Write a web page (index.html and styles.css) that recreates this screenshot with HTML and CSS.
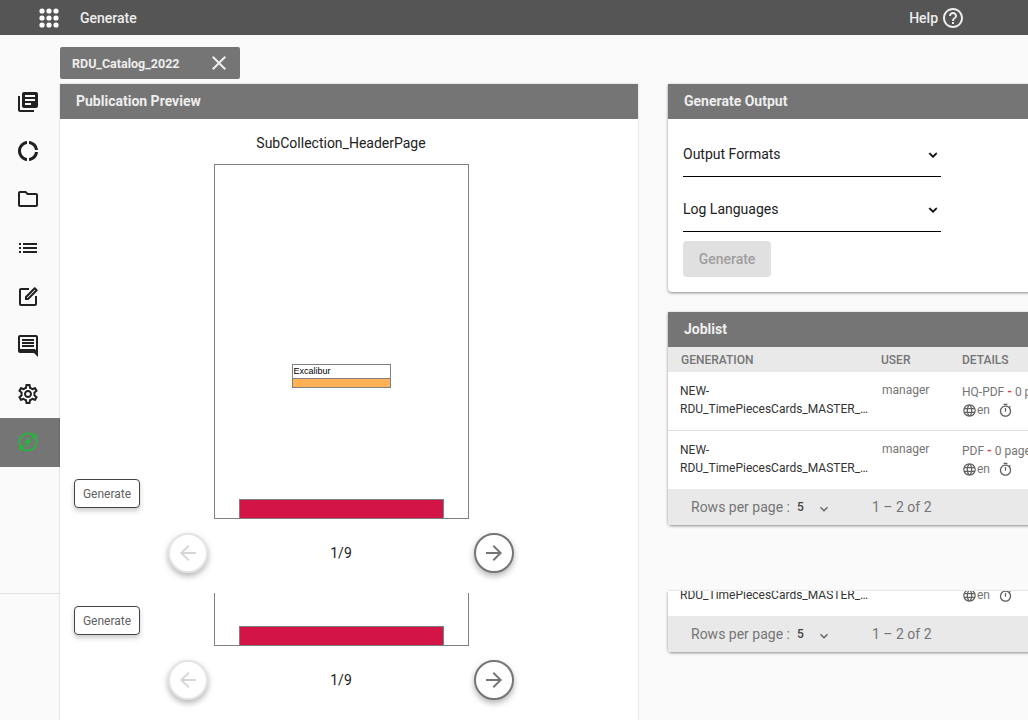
FILE: index.html
```html
<!DOCTYPE html>
<html lang="en">
<head>
  <meta charset="UTF-8" />
  <meta name="viewport" content="width=device-width, initial-scale=1.0"/>
  <title>Generate</title>
  <link rel="stylesheet" href="styles.css">
</head>
<body>
  <svg class="icon-defs" aria-hidden="true">
    <symbol id="i-books" viewBox="0 0 24 24"><path d="M4 6H2v14c0 1.1.9 2 2 2h14v-2H4V6zm16-4H8c-1.1 0-2 .9-2 2v12c0 1.1.9 2 2 2h12c1.1 0 2-.9 2-2V4c0-1.1-.9-2-2-2zm-1 9H9V9h10v2zm-4 4H9v-2h6v2zm4-8H9V5h10v2z"/></symbol>
    <symbol id="i-donut" viewBox="0 0 24 24"><path d="M11 5.08V2c-5 .5-9 4.81-9 10s4 9.5 9 10v-3.08c-3-.48-6-3.19-6-6.92s3-6.44 6-6.92zM18.97 11H22c-.47-5-4-8.53-9-9v3.08C16 5.51 18.54 8 18.97 11zM13 18.92V22c5-.47 8.53-4 9-9h-3.03c-.43 3-2.97 5.49-5.97 5.92z"/></symbol>
    <symbol id="i-folder" viewBox="0 0 24 24"><path d="M9.17 6l2 2H20v10H4V6h5.17M10 4H4c-1.1 0-1.99.9-1.99 2L2 18c0 1.1.9 2 2 2h16c1.1 0 2-.9 2-2V8c0-1.1-.9-2-2-2h-8l-2-2z"/></symbol>
    <symbol id="i-list" viewBox="0 0 24 24"><path d="M3 13h2v-2H3v2zm0 4h2v-2H3v2zm0-8h2V7H3v2zm4 4h14v-2H7v2zm0 4h14v-2H7v2zM7 7v2h14V7H7z"/></symbol>
    <symbol id="i-edit" viewBox="0 0 24 24"><path d="M5 5h8V3H5c-1.1 0-2 .9-2 2v14c0 1.1.9 2 2 2h14c1.1 0 2-.9 2-2v-8h-2v8H5V5z"/><path d="M18 2.6 9 11.6V15h3.4l9-9c.4-.4.4-1 0-1.4l-2-2c-.4-.4-1-.4-1.4 0zM11 13v-.6l7.7-7.7.6.6-7.7 7.7H11z" fill-rule="evenodd"/></symbol>
    <symbol id="i-chat" viewBox="0 0 24 24"><path d="M20 2H4c-1.1 0-2 .9-2 2v14c0 1.1.9 2 2 2h14l4 4V4c0-1.1-.9-2-2-2zm0 15.17L18.83 16H4V4h16v13.17zM6 12h12v2H6zm0-3h12v2H6zm0-3h12v2H6z"/></symbol>
    <symbol id="i-gear" viewBox="0 0 24 24"><path d="M19.43 12.98c.04-.32.07-.64.07-.98 0-.34-.03-.66-.07-.98l2.11-1.65c.19-.15.24-.42.12-.64l-2-3.46c-.09-.16-.26-.25-.44-.25-.06 0-.12.01-.17.03l-2.49 1c-.52-.4-1.08-.73-1.69-.98l-.38-2.65C14.46 2.18 14.25 2 14 2h-4c-.25 0-.46.18-.49.42l-.38 2.65c-.61.25-1.17.59-1.69.98l-2.49-1c-.06-.02-.12-.03-.18-.03-.17 0-.34.09-.43.25l-2 3.46c-.13.22-.07.49.12.64l2.11 1.65c-.04.32-.07.65-.07.98 0 .33.03.66.07.98l-2.11 1.65c-.19.15-.24.42-.12.64l2 3.46c.09.16.26.25.44.25.06 0 .12-.01.17-.03l2.49-1c.52.4 1.08.73 1.69.98l.38 2.65c.03.24.24.42.49.42h4c.25 0 .46-.18.49-.42l.38-2.65c.61-.25 1.17-.59 1.69-.98l2.49 1c.06.02.12.03.18.03.17 0 .34-.09.43-.25l2-3.46c.12-.22.07-.49-.12-.64l-2.11-1.65zm-1.98-1.71c.04.31.05.52.05.73 0 .21-.02.43-.05.73l-.14 1.13.89.7 1.08.84-.7 1.21-1.27-.51-1.04-.42-.9.68c-.43.32-.84.56-1.25.73l-1.06.43-.16 1.13-.2 1.35h-1.4l-.19-1.35-.16-1.13-1.06-.43c-.43-.18-.83-.41-1.23-.71l-.91-.7-1.06.43-1.27.51-.7-1.21 1.08-.84.89-.7-.14-1.13c-.03-.31-.05-.54-.05-.74s.02-.43.05-.73l.14-1.13-.89-.7-1.08-.84.7-1.21 1.27.51 1.04.42.9-.68c.43-.32.84-.56 1.25-.73l1.06-.43.16-1.13.2-1.35h1.39l.19 1.35.16 1.13 1.06.43c.43.18.83.41 1.23.71l.91.7 1.06-.43 1.27-.51.7 1.21-1.07.85-.89.7.14 1.13zM12 8c-2.21 0-4 1.79-4 4s1.79 4 4 4 4-1.79 4-4-1.79-4-4-4zm0 6c-1.1 0-2-.9-2-2s.9-2 2-2 2 .9 2 2-.9 2-2 2z"/></symbol>
    <symbol id="i-sync-bolt" viewBox="0 0 24 24"><path d="M4.3 16.2A9 9 0 0 1 18 5.3" fill="none" stroke="currentColor" stroke-width="2"/><path d="M19.7 7.8A9 9 0 0 1 6 18.7" fill="none" stroke="currentColor" stroke-width="2"/><path d="M20.5 2.5v6h-6zM3.5 21.5v-6h6z"/><path d="M13.5 6 8 13h3l-1 5 6-7.5h-3.2z"/></symbol>
    <symbol id="i-help" viewBox="0 0 24 24"><path d="M11 18h2v-2h-2v2zm1-16C6.48 2 2 6.48 2 12s4.48 10 10 10 10-4.48 10-10S17.52 2 12 2zm0 18c-4.41 0-8-3.59-8-8s3.59-8 8-8 8 3.59 8 8-3.59 8-8 8zm0-14c-2.21 0-4 1.79-4 4h2c0-1.1.9-2 2-2s2 .9 2 2c0 2-3 1.75-3 5h2c0-2.25 3-2.5 3-5 0-2.21-1.79-4-4-4z"/></symbol>
    <symbol id="i-close" viewBox="0 0 24 24"><path d="M19 6.41L17.59 5 12 10.59 6.41 5 5 6.41 10.59 12 5 17.59 6.41 19 12 13.41 17.59 19 19 17.59 13.41 12z"/></symbol>
    <symbol id="i-back" viewBox="0 0 24 24"><path d="M20 11H7.83l5.59-5.59L12 4l-8 8 8 8 1.41-1.41L7.83 13H20v-2z"/></symbol>
    <symbol id="i-forward" viewBox="0 0 24 24"><path d="M12 4l-1.41 1.41L16.17 11H4v2h12.17l-5.58 5.59L12 20l8-8z"/></symbol>
    <symbol id="i-chevron" viewBox="0 0 24 24"><path d="M16.59 8.59L12 13.17 7.41 8.59 6 10l6 6 6-6z"/></symbol>
    <symbol id="i-globe" viewBox="0 0 24 24"><path d="M11.99 2C6.47 2 2 6.48 2 12s4.47 10 9.99 10C17.52 22 22 17.52 22 12S17.52 2 11.99 2zm6.93 6h-2.95c-.32-1.25-.78-2.45-1.38-3.56 1.84.63 3.37 1.91 4.33 3.56zM12 4.04c.83 1.2 1.48 2.53 1.91 3.96h-3.82c.43-1.43 1.08-2.76 1.91-3.96zM4.26 14C4.1 13.36 4 12.69 4 12s.1-1.36.26-2h3.38c-.08.66-.14 1.32-.14 2 0 .68.06 1.34.14 2H4.26zm.82 2h2.95c.32 1.25.78 2.45 1.38 3.56-1.84-.63-3.37-1.9-4.33-3.56zm2.95-8H5.08c.96-1.66 2.49-2.93 4.33-3.56C8.81 5.55 8.35 6.75 8.03 8zM12 19.96c-.83-1.2-1.48-2.53-1.91-3.96h3.82c-.43 1.43-1.08 2.76-1.91 3.96zM14.34 14H9.66c-.09-.66-.16-1.32-.16-2 0-.68.07-1.35.16-2h4.68c.09.65.16 1.32.16 2 0 .68-.07 1.34-.16 2zm.25 5.56c.6-1.11 1.06-2.31 1.38-3.56h2.95c-.96 1.65-2.49 2.93-4.33 3.56zM16.36 14c.08-.66.14-1.32.14-2 0-.68-.06-1.34-.14-2h3.38c.16.64.26 1.31.26 2s-.1 1.36-.26 2h-3.38z"/></symbol>
    <symbol id="i-timer" viewBox="0 0 24 24"><path d="M15 1H9v2h6V1zm-4 13h2V8h-2v6zm8.03-6.61l1.42-1.42c-.43-.51-.9-.99-1.41-1.41l-1.42 1.42C16.07 4.74 14.12 4 12 4c-4.97 0-9 4.03-9 9s4.02 9 9 9 9-4.03 9-9c0-2.12-.74-4.07-1.97-5.61zM12 20c-3.87 0-7-3.13-7-7s3.13-7 7-7 7 3.13 7 7-3.13 7-7 7z"/></symbol>
  </svg>

  <header class="topbar">
    <svg class="apps-icon" viewBox="0 0 20 20" aria-hidden="true">
      <circle cx="3" cy="3" r="2.6"/><circle cx="10" cy="3" r="2.6"/><circle cx="17" cy="3" r="2.6"/>
      <circle cx="3" cy="10" r="2.6"/><circle cx="10" cy="10" r="2.6"/><circle cx="17" cy="10" r="2.6"/>
      <circle cx="3" cy="17" r="2.6"/><circle cx="10" cy="17" r="2.6"/><circle cx="17" cy="17" r="2.6"/>
    </svg>
    <span class="topbar-title">Generate</span>
    <span class="help">Help <svg class="help-icon"><use href="#i-help"/></svg></span>
  </header>

  <div class="main">
    <nav class="sidebar">
      <a class="side-item"><svg class="icon"><use href="#i-books"/></svg></a>
      <a class="side-item"><svg class="icon"><use href="#i-donut"/></svg></a>
      <a class="side-item"><svg class="icon"><use href="#i-folder"/></svg></a>
      <a class="side-item"><svg class="icon"><use href="#i-list"/></svg></a>
      <a class="side-item"><svg class="icon"><use href="#i-edit"/></svg></a>
      <a class="side-item"><svg class="icon"><use href="#i-chat"/></svg></a>
      <a class="side-item"><svg class="icon"><use href="#i-gear"/></svg></a>
      <a class="side-item active"><svg class="icon"><use href="#i-sync-bolt"/></svg></a>
      <div class="side-rule"></div>
    </nav>

    <section class="left-col">
      <div class="doc-tab">
        <span>RDU_Catalog_2022</span>
        <svg class="tab-close"><use href="#i-close"/></svg>
      </div>

      <div class="panel">
        <h2 class="panel-head">Publication Preview</h2>

        <div class="preview">
          <div class="preview-title">SubCollection_HeaderPage</div>
          <button class="small-btn">Generate</button>
          <div class="sheet">
            <div class="frame">
              <div class="frame-text">Excalibur</div>
              <div class="frame-bar"></div>
            </div>
            <div class="sheet-bar"></div>
          </div>
          <div class="pager">
            <span class="round-btn off"><svg class="icon"><use href="#i-back"/></svg></span>
            <span class="pager-count">1/9</span>
            <span class="round-btn"><svg class="icon"><use href="#i-forward"/></svg></span>
          </div>
        </div>

        <div class="preview preview-cut">
          <button class="small-btn">Generate</button>
          <div class="sheet sheet-cut">
            <div class="sheet-bar"></div>
          </div>
          <div class="pager">
            <span class="round-btn off"><svg class="icon"><use href="#i-back"/></svg></span>
            <span class="pager-count">1/9</span>
            <span class="round-btn"><svg class="icon"><use href="#i-forward"/></svg></span>
          </div>
        </div>
      </div>
    </section>

    <section class="right-col">
      <div class="card">
        <h2 class="panel-head">Generate Output</h2>
        <div class="output-body">
          <div class="select-field">
            <span>Output Formats</span>
            <svg class="select-arrow"><use href="#i-chevron"/></svg>
          </div>
          <div class="select-field">
            <span>Log Languages</span>
            <svg class="select-arrow"><use href="#i-chevron"/></svg>
          </div>
          <button class="generate-btn" disabled>Generate</button>
        </div>
      </div>

      <div class="card joblist">
        <h2 class="panel-head">Joblist</h2>
        <div class="job-head">
          <span>GENERATION</span>
          <span>USER</span>
          <span>DETAILS</span>
        </div>
        <div class="job-row">
          <div class="job-name">NEW-<br>RDU_TimePiecesCards_MASTER_…</div>
          <div class="job-user">manager</div>
          <div class="job-details">
            <div>HQ-PDF <b class="dash">-</b> 0 pages</div>
            <div class="job-meta">
              <svg class="meta-icon"><use href="#i-globe"/></svg><span>en</span>
              <svg class="meta-icon timer"><use href="#i-timer"/></svg>
            </div>
          </div>
        </div>
        <div class="job-row last">
          <div class="job-name">NEW-<br>RDU_TimePiecesCards_MASTER_…</div>
          <div class="job-user">manager</div>
          <div class="job-details">
            <div>PDF <b class="dash">-</b> 0 pages</div>
            <div class="job-meta">
              <svg class="meta-icon"><use href="#i-globe"/></svg><span>en</span>
              <svg class="meta-icon timer"><use href="#i-timer"/></svg>
            </div>
          </div>
        </div>
        <div class="job-foot">
          <span>Rows per page :</span>
          <span class="rows-value">5</span>
          <svg class="rows-arrow"><use href="#i-chevron"/></svg>
          <span class="rows-range">1 – 2 of 2</span>
        </div>
      </div>

      <div class="card job-cut">
        <div class="job-row job-row-cut">
          <div class="job-name">RDU_TimePiecesCards_MASTER_…</div>
          <div class="job-user"></div>
          <div class="job-meta">
            <svg class="meta-icon"><use href="#i-globe"/></svg><span>en</span>
            <svg class="meta-icon timer"><use href="#i-timer"/></svg>
          </div>
        </div>
        <div class="job-foot">
          <span>Rows per page :</span>
          <span class="rows-value">5</span>
          <svg class="rows-arrow"><use href="#i-chevron"/></svg>
          <span class="rows-range">1 – 2 of 2</span>
        </div>
      </div>
    </section>
  </div>
</body>
</html>
```

FILE: styles.css
```css
:root {
  --bar-color: #555555;
  --head-color: #757575;
  --page-color: #fafafa;
  --muted-color: #757575;
  --foot-color: #e9e9e9;
  --line-color: #808080;
}

html, body {
  height: 720px;
  overflow: hidden;
}

body {
  margin: 0;
  font-family: Roboto, sans-serif;
  font-size: 14px;
  background-color: var(--page-color);
  color: #212121;
}

.icon-defs {
  display: none;
}

/* top bar */
.topbar {
  display: flex;
  align-items: center;
  height: 35px;
  padding: 0 63px 0 39px;
  background: var(--bar-color);
  color: #eeeeee;
  font-weight: 500;
}

.apps-icon {
  width: 20px;
  height: 20px;
  fill: #ffffff;
}

.topbar-title {
  margin-left: 21px;
}

.help {
  display: flex;
  align-items: center;
  gap: 3px;
  margin-left: auto;
}

.help-icon {
  width: 24px;
  height: 24px;
  fill: #eeeeee;
}

.main {
  display: flex;
  height: 685px;
}

/* side navigation */
.sidebar {
  flex: none;
  width: 60px;
  padding-top: 43px;
}

.side-item {
  display: flex;
  align-items: center;
  height: 48.6px;
  padding-left: 16px;
  box-sizing: border-box;
}

.side-item.active {
  background: var(--head-color);
  color: #27b53c;
}

.icon {
  width: 24px;
  height: 24px;
  fill: currentColor;
}

.side-rule {
  margin-top: 126px;
  border-top: 1px solid #e2e2e2;
}

/* left column */
.left-col {
  flex: none;
  width: 578px;
  padding-top: 12px;
}

.doc-tab {
  display: flex;
  align-items: center;
  justify-content: space-between;
  width: 180px;
  height: 32px;
  box-sizing: border-box;
  padding: 0 15px 0 12px;
  margin-bottom: 5px;
  background: var(--head-color);
  border-radius: 2px;
  color: #eeeeee;
  font-size: 12.5px;
  font-weight: 700;
}

.tab-close {
  width: 24px;
  height: 24px;
  margin-right: -6px;
  fill: #eeeeee;
}

.panel {
  height: 640px;
  background: #ffffff;
  box-shadow: 0 0 2px rgba(0, 0, 0, 0.2);
}

.panel-head {
  height: 35px;
  margin: 0;
  padding-left: 16px;
  background: var(--head-color);
  color: #eeeeee;
  font-size: 14px;
  font-weight: 700;
  line-height: 35px;
}

.preview {
  display: grid;
  grid-template-columns: 94px 346px;
  padding: 14px 0 20px 14px;
}

.preview-cut {
  padding-top: 0;
}

.preview-title {
  grid-column: 2;
  margin-bottom: 11px;
  line-height: 20px;
  text-align: center;
}

.small-btn {
  grid-column: 1;
  align-self: end;
  justify-self: start;
  width: 66px;
  height: 29px;
  margin-bottom: 11px;
  padding: 0;
  background: #ffffff;
  border: 1px solid #444444;
  border-radius: 4px;
  box-shadow: 0 3px 5px rgba(0, 0, 0, 0.2);
  color: #616161;
  font-family: inherit;
  font-size: 12px;
}

.sheet {
  grid-column: 2;
  display: flex;
  flex-direction: column;
  align-items: center;
  justify-self: center;
  width: 255px;
  height: 355px;
  box-sizing: border-box;
  border: 1px solid var(--line-color);
}

.sheet-cut {
  height: 53px;
  border-top: none;
}

.frame {
  width: 99px;
  height: 24px;
  margin-top: 199px;
  box-sizing: border-box;
  border: 1px solid var(--line-color);
  background: #ffb155;
}

.frame-text {
  height: 13px;
  padding-left: 1px;
  background: #ffffff;
  border-bottom: 1px solid var(--line-color);
  color: #000000;
  font-family: "Liberation Sans", sans-serif;
  font-size: 9px;
  line-height: 13px;
}

.frame-bar {
  height: 9px;
}

.sheet-bar {
  width: 205px;
  height: 19px;
  margin-top: auto;
  box-sizing: border-box;
  border: 1px solid var(--line-color);
  border-bottom: none;
  background: #d31447;
}

.pager {
  grid-column: 2;
  display: flex;
  align-items: center;
  justify-content: space-between;
  margin-top: 14px;
}

.round-btn {
  display: flex;
  align-items: center;
  justify-content: center;
  width: 40px;
  height: 40px;
  box-sizing: border-box;
  border: 2px solid #757575;
  border-radius: 50%;
  background: #ffffff;
  box-shadow: 0 3px 6px rgba(0, 0, 0, 0.3);
  color: #757575;
}

.round-btn.off {
  border-color: #e4e4e4;
  color: #d6d6d6;
}

/* right column */
.right-col {
  flex: none;
  width: 420px;
  margin-left: 30px;
  padding-top: 49px;
}

.card {
  background: #ffffff;
  border-radius: 0 0 4px 4px;
  box-shadow: 0 1px 3px rgba(0, 0, 0, 0.45);
}

.output-body {
  padding: 13px 15px 15px;
}

.select-field {
  display: flex;
  align-items: center;
  justify-content: space-between;
  width: 258px;
  height: 44px;
  margin-bottom: 10px;
  border-bottom: 1px solid #000000;
}

.select-arrow {
  width: 16px;
  height: 16px;
  margin-top: 2px;
  fill: #000000;
  stroke: #000000;
  stroke-width: 0.8;
}

.generate-btn {
  display: block;
  width: 88px;
  height: 36px;
  margin-top: -1px;
  padding: 0;
  background: #e0e0e0;
  border: none;
  border-radius: 4px;
  color: #9e9e9e;
  font-family: inherit;
  font-size: 14px;
  font-weight: 500;
}

.joblist {
  margin-top: 20px;
}

.job-head,
.job-row {
  display: grid;
  grid-template-columns: 201px 81px auto;
  padding-left: 12px;
}

.job-head {
  height: 25px;
  align-items: center;
  background: var(--foot-color);
  color: var(--muted-color);
  font-size: 12px;
  font-weight: 500;
}

.job-head span:first-child {
  padding-left: 1px;
}

.job-row {
  height: 59px;
  box-sizing: border-box;
  border-bottom: 1px solid #e0e0e0;
  font-size: 12px;
  line-height: 18px;
  color: #333333;
}

.job-row.last {
  height: 58px;
  border-bottom: none;
}

.job-name {
  padding-top: 10px;
}

.job-user {
  padding: 9px 0 0 1px;
  color: var(--muted-color);
}

.job-details {
  padding-top: 11px;
  white-space: nowrap;
  color: var(--muted-color);
}

.dash {
  color: #e53935;
}

.job-meta {
  display: flex;
  align-items: center;
  height: 18px;
  color: var(--muted-color);
}

.meta-icon {
  width: 15px;
  height: 15px;
  fill: #616161;
}

.meta-icon.timer {
  margin-left: 8px;
}

.job-foot {
  display: flex;
  align-items: center;
  height: 36px;
  padding-left: 23px;
  background: var(--foot-color);
  color: var(--muted-color);
}

.rows-value {
  width: 19px;
  margin-left: 7px;
  color: #424242;
  font-size: 12px;
  font-weight: 500;
}

.rows-arrow {
  width: 16px;
  height: 16px;
  margin-top: 4px;
  fill: #616161;
}

.rows-range {
  margin-left: 40px;
}

.job-cut {
  margin-top: 66px;
}

.job-row-cut {
  height: 25px;
  align-items: start;
  overflow: hidden;
  border-bottom: none;
}

.job-row-cut .job-name {
  padding-top: 0;
  margin-top: -5px;
}

.job-row-cut .job-user {
  padding: 0;
}

.job-row-cut .job-meta {
  margin-top: -5px;
}
```
